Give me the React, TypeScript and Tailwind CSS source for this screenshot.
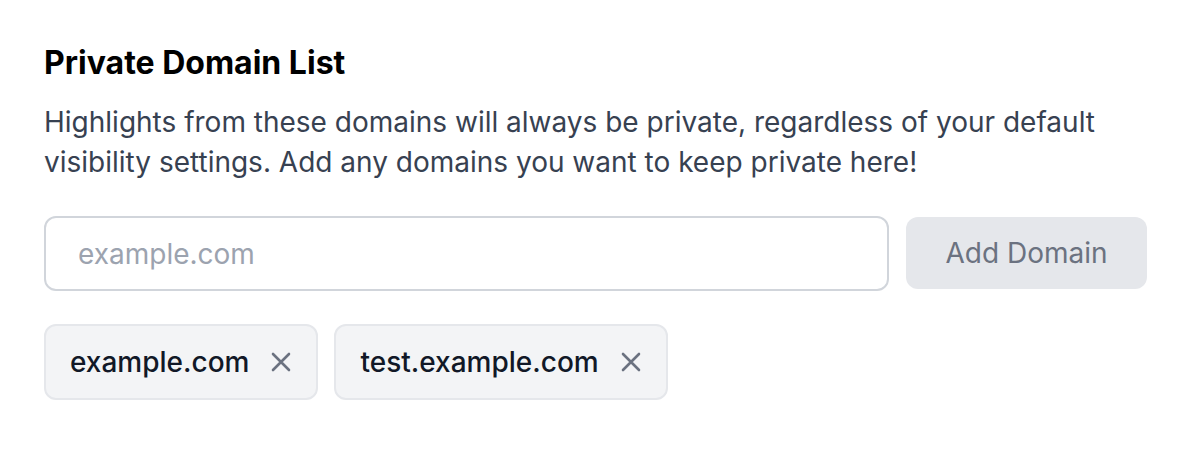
import { useState } from 'react';

const initialDomains = ['example.com', 'test.example.com'];

function XIcon() {
  return (
    <svg width="20" height="20" viewBox="0 0 20 20" fill="none" className="shrink-0">
      <path d="M2 2L18 18M18 2L2 18" stroke="#6b7280" strokeWidth="2.6" strokeLinecap="round" />
    </svg>
  );
}

export default function App() {
  const [domains, setDomains] = useState(initialDomains);
  const [value, setValue] = useState('');

  const addDomain = () => {
    const v = value.trim();
    if (!v || domains.includes(v)) return;
    setDomains([...domains, v]);
    setValue('');
  };

  return (
    <div className="min-h-screen bg-white font-['Inter',sans-serif] pl-[44px] pr-[41px] pt-[43px]">
      <h2 className="text-[32px] leading-[40px] font-bold text-black">Private Domain List</h2>
      <p className="mt-[19px] text-[28px] leading-[40px] text-[#374151] max-w-[1100px]">
        Highlights from these domains will always be private, regardless of your default visibility
        settings. Add any domains you want to keep private here!
      </p>

      <div className="mt-[34px] flex gap-[17px]">
        <input
          value={value}
          onChange={(e) => setValue(e.target.value)}
          placeholder="example.com"
          className="flex-1 h-[75px] rounded-[12px] border-2 border-[#d1d5db] px-[32px] text-[28px] text-gray-900 placeholder:text-[#9ca3af] outline-none"
        />
        <button
          type="button"
          onClick={addDomain}
          className="mt-px h-[72px] w-[241px] rounded-[12px] bg-[#e5e7eb] text-[28px] text-[#6b7280]"
        >
          Add Domain
        </button>
      </div>

      <div className="mt-[33px] flex flex-wrap gap-[16px]">
        {domains.map((d) => (
          <div
            key={d}
            className="flex h-[76px] items-center gap-[22px] rounded-[12px] border-2 border-[#e5e7eb] bg-[#f3f4f6] pl-[24px] pr-[25px]"
          >
            <span className="text-[28px] leading-[40px] font-medium text-[#111827]">{d}</span>
            <button type="button" onClick={() => setDomains(domains.filter((x) => x !== d))}>
              <XIcon />
            </button>
          </div>
        ))}
      </div>
    </div>
  );
}
